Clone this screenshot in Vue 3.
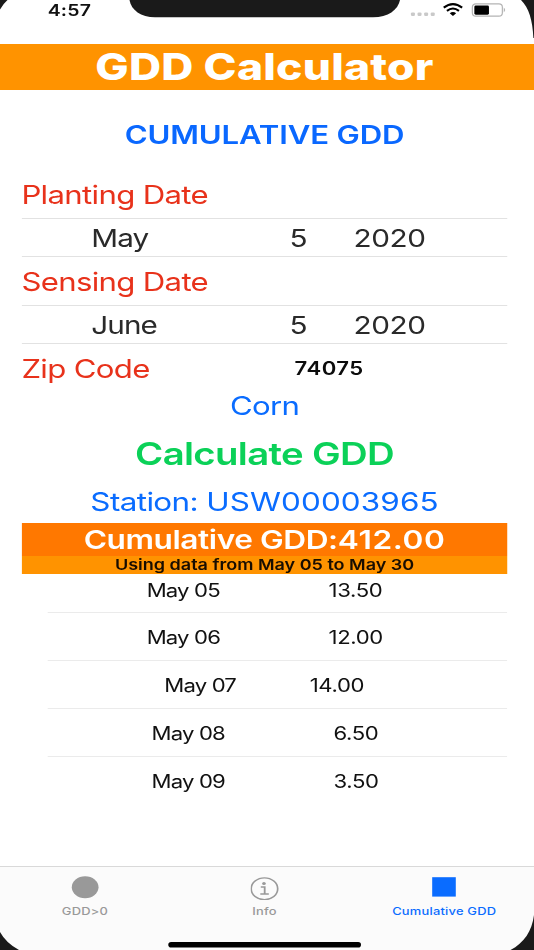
<script setup>
import { ref } from 'vue'

const plantingDate = ref({ month: 'May', day: 5, year: 2020 })
const sensingDate = ref({ month: 'June', day: 5, year: 2020 })
const zipCode = ref('74075')
const crop = ref('Corn')
const station = ref('USW00003965')
const total = ref('412.00')
const activeTab = ref('cumulative')

const days = [
  { date: 'May 05', gdd: '13.50', size: 'wide' },
  { date: 'May 06', gdd: '12.00', size: 'wide' },
  { date: 'May 07', gdd: '14.00', size: 'tight' },
  { date: 'May 08', gdd: '6.50', size: 'short' },
  { date: 'May 09', gdd: '3.50', size: 'short' },
]

const tabs = [
  { id: 'gdd', label: 'GDD>0' },
  { id: 'info', label: 'Info' },
  { id: 'cumulative', label: 'Cumulative GDD' },
]
</script>

<template>
  <div class="device">
    <div class="screen">
      <header class="status-bar">
        <span class="time">4:57</span>
        <svg class="status-icons" viewBox="0 0 98 20" preserveAspectRatio="none">
          <g fill="#c9c9c9">
            <rect x="1" y="12.4" width="4" height="3.6" rx="1.2" />
            <rect x="7.6" y="12.4" width="4" height="3.6" rx="1.2" />
            <rect x="14.2" y="12.4" width="4" height="3.6" rx="1.2" />
            <rect x="20.8" y="12.4" width="4" height="3.6" rx="1.2" />
          </g>
          <g fill="none" stroke="#000" stroke-width="2.1">
            <path d="M33.8 7.7Q43 0.6 52.2 7.7" />
            <path d="M37 10.9Q43 6.1 49 10.9" />
          </g>
          <path d="M39.8 13.2Q43 10.8 46.2 13.2L43 16Z" fill="#000" />
          <rect x="62.4" y="3.8" width="30" height="12.4" rx="3.4" fill="#fff" stroke="#b4b4b4" stroke-width="1.2" />
          <rect x="64.4" y="5.5" width="14.6" height="9.2" rx="1.4" fill="#000" />
          <path d="M93.8 7.6Q96.6 10 93.8 12.4Z" fill="#b4b4b4" />
        </svg>
      </header>

      <h1 class="title">GDD Calculator</h1>

      <main class="content">
        <h2 class="heading">CUMULATIVE GDD</h2>

        <div class="label first">Planting Date</div>
        <div class="picker">
          <span class="month">{{ plantingDate.month }}</span>
          <span class="day">{{ plantingDate.day }}</span>
          <span class="year">{{ plantingDate.year }}</span>
        </div>

        <div class="label">Sensing Date</div>
        <div class="picker">
          <span class="month">{{ sensingDate.month }}</span>
          <span class="day">{{ sensingDate.day }}</span>
          <span class="year">{{ sensingDate.year }}</span>
        </div>

        <div class="zip-row">
          <span class="label">Zip Code</span>
          <span class="zip">{{ zipCode }}</span>
        </div>

        <div class="crop">{{ crop }}</div>
        <div class="calculate">Calculate GDD</div>
        <div class="station">Station: <span class="station-id">{{ station }}</span></div>

        <div class="total">Cumulative GDD:<span class="total-value">{{ total }}</span></div>
        <div class="range">Using data from May 05 to May 30</div>

        <div class="list">
          <div v-for="day in days" :key="day.date" class="row" :class="day.size">
            <span class="date">{{ day.date }}</span>
            <span class="gdd">{{ day.gdd }}</span>
          </div>
        </div>
      </main>

      <nav class="tab-bar">
        <div
          v-for="tab in tabs"
          :key="tab.id"
          class="tab"
          :class="{ active: activeTab === tab.id }"
          @click="activeTab = tab.id"
        >
          <svg class="tab-icon" viewBox="0 0 24 24">
            <circle v-if="tab.id === 'gdd'" cx="12" cy="11.2" r="11" fill="currentColor" />
            <g v-else-if="tab.id === 'info'" fill="none" stroke="currentColor">
              <circle cx="11.4" cy="12.8" r="10.9" stroke-width="1.4" />
              <circle cx="11" cy="7.6" r="1.5" fill="currentColor" stroke="none" />
              <path d="M8.4 11H11.6V18M8 18H15" stroke-width="1.5" />
            </g>
            <rect v-else x="2.3" y="1.2" width="19.4" height="19.4" fill="currentColor" />
          </svg>
          <span class="tab-label">{{ tab.label }}</span>
        </div>
      </nav>
    </div>

    <!-- phone frame: notch, rounded corners, home indicator -->
    <svg class="frame" viewBox="0 0 534 950">
      <g fill="#1a1a1a">
        <path d="M129.5 0C131 10 141 17.3 155 17.3H373C388 17.3 398 10 400 0Z" />
        <path d="M0 0H7.5Q3 4 0 9.5Z" />
        <path d="M521 0C529 8 532.5 20 533.4 38H534V0Z" />
        <path d="M0 932Q6 943 19 950H0Z" />
        <path d="M534 915C532 931 524 943 510.5 950H534Z" />
      </g>
      <rect x="168.3" y="942" width="192.7" height="5.6" rx="2.8" fill="#000" />
    </svg>
  </div>
</template>

<style>
body {
  margin: 0;
  background: #fff;
}
</style>

<style scoped>
.device {
  position: relative;
  width: 534px;
  height: 950px;
  overflow: hidden;
  background: #fff;
  font-family: Inter, 'Liberation Sans', sans-serif;
}

/* the app is shown stretched sideways */
.screen {
  display: flex;
  flex-direction: column;
  width: 439px;
  height: 950px;
  transform: scaleX(1.2164);
  transform-origin: 0 0;
  white-space: nowrap;
}

.frame {
  position: absolute;
  inset: 0;
  width: 534px;
  height: 950px;
  pointer-events: none;
}

.status-bar {
  display: flex;
  justify-content: space-between;
  height: 44px;
  padding: 0 21px 0 39.2px;
}

.time {
  font-size: 16px;
  font-weight: 600;
  line-height: 21px;
  letter-spacing: 0.2px;
  color: #111;
}

.status-icons {
  width: 80.6px;
  height: 20px;
}

.title {
  margin: 0;
  padding-right: 4px;
  height: 45.5px;
  line-height: 46px;
  background: #ff9300;
  color: #fff;
  font-size: 36.5px;
  font-weight: 800;
  letter-spacing: 0.2px;
  text-align: center;
}

.content {
  flex: 1;
  padding: 0 21.6px 0 17.6px;
}

.heading {
  margin: 0;
  height: 89.5px;
  line-height: 89px;
  color: #0a68ff;
  font-size: 25.6px;
  font-weight: 600;
  letter-spacing: -0.12px;
  text-align: center;
}

.label {
  height: 48px;
  line-height: 49px;
  color: #e8321b;
  font-size: 25.6px;
  letter-spacing: -0.55px;
}

.label.first {
  height: 39px;
  line-height: 31px;
}

.picker {
  display: flex;
  height: 37px;
  line-height: 38.5px;
  border-top: 1px solid #e2e2e2;
  border-bottom: 1px solid #e2e2e2;
  color: #2a2a2a;
  font-size: 24.4px;
}

.month {
  width: 163px;
  padding-left: 57.5px;
  letter-spacing: -0.8px;
}

.day {
  width: 52.5px;
}

.year {
  letter-spacing: -0.3px;
}

.zip-row {
  display: flex;
  height: 48px;
}

.zip-row .label {
  width: 224.5px;
}

.zip {
  color: #0c0c0c;
  font-size: 18.2px;
  font-weight: 600;
  line-height: 48px;
  letter-spacing: 0.4px;
}

.crop {
  height: 28px;
  line-height: 28px;
  color: #0a6cff;
  font-size: 25.6px;
  letter-spacing: -0.6px;
  text-align: center;
}

.calculate {
  height: 68px;
  line-height: 68px;
  color: #0bd158;
  font-size: 31.5px;
  font-weight: 600;
  letter-spacing: -0.55px;
  text-align: center;
}

.station {
  height: 35px;
  line-height: 27px;
  color: #0a6cff;
  font-size: 25.8px;
  letter-spacing: -0.5px;
  text-align: center;
}

.station-id {
  letter-spacing: 0.12px;
}

.total {
  height: 32.5px;
  line-height: 33.5px;
  background: #ff7800;
  color: #fff;
  font-size: 26px;
  font-weight: 600;
  letter-spacing: -0.35px;
  text-align: center;
}

.total-value {
  letter-spacing: 0.5px;
}

.range {
  height: 18.5px;
  line-height: 18.5px;
  background: #ff9300;
  color: #180d00;
  font-size: 14.8px;
  font-weight: 600;
  text-align: center;
}

.list {
  height: 240px;
  margin-left: 21.5px;
  overflow: hidden;
  color: #111;
  font-size: 18.2px;
}

.row {
  display: flex;
  box-sizing: border-box;
  height: 48px;
  padding-left: 81.5px;
  line-height: 49px;
  border-bottom: 1px solid #ebebeb;
}

/* the first row is scrolled partly under the header */
.row:first-child {
  height: 39px;
  line-height: 32px;
}

.row:last-child {
  border-bottom: none;
}

.date {
  width: 149.5px;
  letter-spacing: -0.7px;
}

.gdd {
  letter-spacing: -0.3px;
}

.row.tight {
  padding-left: 96px;
}

.tight .date {
  width: 119.5px;
}

.row.short {
  padding-left: 85.5px;
}

.tab-bar {
  display: flex;
  box-sizing: border-box;
  height: 84px;
  margin-left: -4px;
  padding-top: 9px;
  background: #fbfbfb;
  border-top: 1px solid #d9d9d9;
}

.tab {
  flex: 1;
  display: flex;
  flex-direction: column;
  align-items: center;
  color: #999;
}

.tab.active {
  color: #0a6cff;
}

.tab-icon {
  width: 24px;
  height: 24px;
}

.tab-label {
  margin-top: 5px;
  font-size: 10.6px;
  font-weight: 500;
  line-height: 13px;
  letter-spacing: 0.18px;
}
</style>
